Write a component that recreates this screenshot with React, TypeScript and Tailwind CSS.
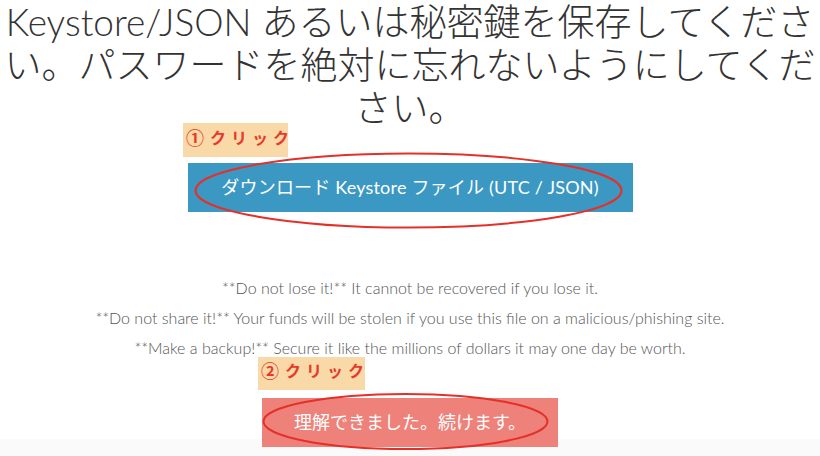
import React from "react";

export default function App() {
  return (
    <div className="relative w-[820px] h-[456px] overflow-hidden bg-[linear-gradient(to_bottom,#ffffff_439px,#fafafa_439px)] flex flex-col items-center text-center">
      <h1 className="m-0 text-[37px] leading-[43px] font-light text-[#333333] font-['Lato','Noto_Sans_CJK_JP',sans-serif]">
        <span className="block whitespace-nowrap">Keystore/JSON あるいは秘密鍵を保存してくださ</span>
        <span className="block whitespace-nowrap">い。パスワードを絶対に忘れないようにしてくだ</span>
        <span className="block whitespace-nowrap">さい。</span>
      </h1>

      <button className="mt-[34px] w-[445px] h-[49px] bg-[#3b98c3] text-white text-[18px] flex items-center justify-center font-['Lato','Noto_Sans_CJK_JP',sans-serif] tracking-[0.2px]">
        ダウンロード Keystore ファイル (UTC / JSON)
      </button>

      <div className="mt-[61px] text-[16px] leading-[30px] font-light text-[#555555] font-['Lato','Noto_Sans_CJK_JP',sans-serif]">
        <p>**Do not lose it!** It cannot be recovered if you lose it.</p>
        <p>**Do not share it!** Your funds will be stolen if you use this file on a malicious/phishing site.</p>
        <p>**Make a backup!** Secure it like the millions of dollars it may one day be worth.</p>
      </div>

      <button className="mt-[35px] w-[296px] h-[49px] bg-[#ee8179] text-white text-[18px] flex items-center justify-center font-['Lato','Noto_Sans_CJK_JP',sans-serif]">
        理解できました。続けます。
      </button>

      {/* annotation labels */}
      <div className="absolute left-[183px] top-[123px] w-[105px] h-[34px] bg-[#f9d9a7] flex items-start pl-[3px] pt-[3px] text-[#e8392b] font-bold text-[16px] leading-[22px] font-['Noto_Sans_CJK_JP',sans-serif] whitespace-nowrap">
        <span className="text-[18px]">①</span>
        <span className="ml-[6px] tracking-[5px]">クリック</span>
      </div>
      <div className="absolute left-[258px] top-[357px] w-[107px] h-[33px] bg-[#f9d9a7] flex items-start pl-[3px] pt-[2px] text-[#e8392b] font-bold text-[16px] leading-[22px] font-['Noto_Sans_CJK_JP',sans-serif] whitespace-nowrap">
        <span className="text-[18px]">②</span>
        <span className="ml-[6px] tracking-[5px]">クリック</span>
      </div>

      {/* annotation ellipses */}
      <svg className="absolute left-0 top-0 pointer-events-none" width="820" height="456" viewBox="0 0 820 456">
        <ellipse cx="408.5" cy="190.5" rx="213" ry="37" fill="none" stroke="#e5302a" strokeWidth="2" />
        <ellipse cx="405.5" cy="421.5" rx="142" ry="27.5" fill="none" stroke="#e5302a" strokeWidth="2" />
      </svg>
    </div>
  );
}
